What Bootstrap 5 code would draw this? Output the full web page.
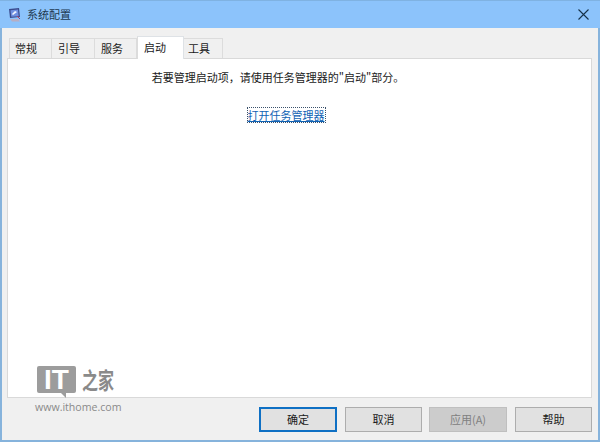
<!DOCTYPE html>
<html lang="zh"><head><meta charset="utf-8">
<link href="https://cdn.jsdelivr.net/npm/bootstrap@5.3.0/dist/css/bootstrap.min.css" rel="stylesheet">
<style>
html,body{width:600px;height:442px;overflow:hidden;background:#f0f0f0}
body{font-family:"Noto Sans CJK SC","Liberation Sans",sans-serif;font-size:11px;color:#1a1a1a;line-height:1.2}
.win{width:600px;height:442px;border:solid #86b3dc;border-width:0 2px 2px 2px;background:#f0f0f0}
.tbar{height:28px;margin:0 -2px;background:#8cc3fb;padding-left:8px;padding-right:11px;gap:6px;border-top:1px solid #7fb2e2}
.tbar .ttl{font-size:11px;color:#20384f}
.xbtn{margin-left:auto}
.tabrow{padding:10px 0 0 7px;height:31px;border:0;flex-wrap:nowrap}
.tabrow .nav-link{height:21px;margin:0;padding:0 0 0 6px;border:1px solid #dcdcdc;border-left-width:0;border-radius:0;background:#f0f0f0;color:#1a1a1a;font-size:11px;display:flex;align-items:center;line-height:1}
.tabrow li:first-child .nav-link{border-left-width:1px;padding-left:5px}
.tabrow .nav-link.active{margin-top:-2px;height:23px;background:#fff;border-bottom:0;border-left:1px solid #dcdcdc;color:#1a1a1a;padding-bottom:2px;position:relative;z-index:1}
.tabrow .nav-link.w5{padding-left:4px}
.w1{width:43px}.w2{width:43px}.w3{width:42px}.w4{width:47px}.w5{width:39px}
.panel{margin:-1px 6px 0 5px;height:340px;background:#fff;border:1px solid #d9d9d9;padding-top:10px;text-align:center}
.hint{margin:0;padding-right:43px;height:17px;line-height:17px}
.opnrow{padding-right:27px;margin-top:22px;line-height:15px}
.opn{display:inline-block;color:#0f62b4;text-decoration:underline;outline:1px dotted #39506a;line-height:14px;font-size:11px}
.foot{padding:9px 6px 0 0;gap:8px;justify-content:flex-end}
.foot .btn{width:77px;height:25px;padding:0;border:1px solid #adadad;border-radius:0;background:#e1e1e1;font-size:11px;color:#1a1a1a;line-height:1}
.foot .btn.pri{border:2px solid #0f70c4;width:78px}
.foot .btn.dis{background:#cccccc;border-color:#bfbfbf;color:#808080;opacity:1;margin-left:-1px;width:78px}
.wm{position:absolute;left:37px;top:366px;width:90px;height:50px}
.bub{position:absolute;left:0;top:0;width:39px;height:27px;background:#9c9c9c;border-radius:2px;color:#fff;font:700 28px/27px "Liberation Sans",sans-serif;text-align:center}
.bub::after{content:"";position:absolute;left:24px;top:27px;border-top:5px solid #9c9c9c;border-left:5px solid transparent}
.cal{position:absolute;left:45px;top:0;font-size:16px;line-height:18px;font-family:"Noto Sans CJK SC",sans-serif;font-weight:700;color:#8a8a8a;white-space:nowrap;transform:scaleY(1.45);transform-origin:top left}
.url{position:absolute;left:-2px;top:33px;font:10.6px/16px "Open Sans",sans-serif;color:#8a8a8a;white-space:nowrap}
</style></head><body>
<div class="win d-flex flex-column">
<div class="tbar d-flex align-items-center">
<svg width="13" height="14" viewBox="0 0 13 14"><path d="M1 1l10-1 1 9-10 1z" fill="#3a4a8c"/><path d="M2.5 2.2l7.5-.7.7 6.7-7.4.6z" fill="#6f8fe0"/><path d="M4 6l3-3 2 1-4 3z" fill="#f2f6ff"/><path d="M2 11h8l2 2.5H4z" fill="#b7aec4"/><path d="M9 8l3 3" stroke="#b83a5a"/></svg>
<span class="ttl">系统配置</span>
<svg class="xbtn" width="11" height="11" viewBox="0 0 11 11"><path d="M.5.5l10 10M10.5.5l-10 10" stroke="#16324a" stroke-width="1.1" fill="none"/></svg>
</div>
<ul class="nav nav-tabs tabrow">
<li class="nav-item"><a class="nav-link w1" href="#">常规</a></li>
<li class="nav-item"><a class="nav-link w2" href="#">引导</a></li>
<li class="nav-item"><a class="nav-link w3" href="#">服务</a></li>
<li class="nav-item"><a class="nav-link w4 active" href="#">启动</a></li>
<li class="nav-item"><a class="nav-link w5" href="#">工具</a></li>
</ul>
<div class="panel">
<p class="hint">若要管理启动项，请使用任务管理器的"启动"部分。</p>
<div class="opnrow"><a class="opn" href="#">打开任务管理器</a></div>
</div>
<div class="foot d-flex">
<button class="btn pri" type="button">确定</button>
<button class="btn" type="button">取消</button>
<button class="btn dis" type="button" disabled>应用(A)</button>
<button class="btn" type="button">帮助</button>
</div>
</div>
<div class="wm"><div class="bub">IT</div><div class="cal">之家</div><div class="url">www.ithome.com</div></div>
</body></html>
